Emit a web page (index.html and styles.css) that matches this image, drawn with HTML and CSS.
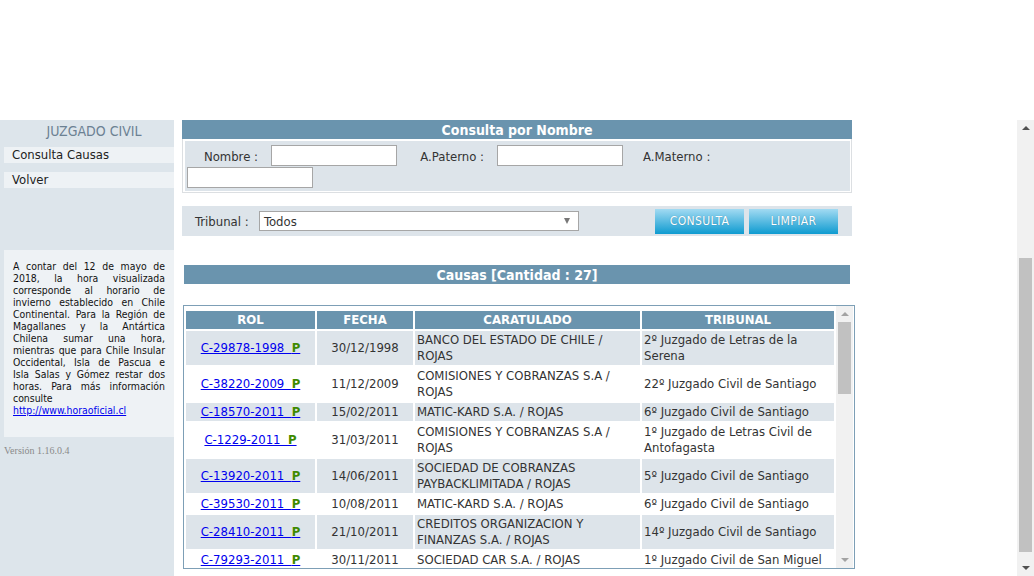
FILE: index.html
```html
<!DOCTYPE html>
<html lang="es">
<head>
<meta charset="utf-8">
<title>Consulta por Nombre</title>
<link rel="stylesheet" href="styles.css">
</head>
<body>
<div class="top"></div>
<div class="frames">
  <aside class="sidebar">
    <div class="side-title">JUZGADO CIVIL</div>
    <div class="menu-item">Consulta Causas</div>
    <div class="menu-item">Volver</div>
    <div class="info">
      <span class="jl">A contar del 12 de mayo de</span>
      <span class="jl">2018, la hora visualizada</span>
      <span class="jl">corresponde al horario de</span>
      <span class="jl">invierno establecido en Chile</span>
      <span class="jl">Continental. Para la Región de</span>
      <span class="jl">Magallanes y la Antártica</span>
      <span class="jl">Chilena sumar una hora,</span>
      <span class="jl">mientras que para Chile Insular</span>
      <span class="jl">Occidental, Isla de Pascua e</span>
      <span class="jl">Isla Salas y Gómez restar dos</span>
      <span class="jl">horas. Para más información</span>
      <span class="ll">consulte</span>
      <a class="ll link" href="#">http://www.horaoficial.cl</a>
    </div>
    <div class="version">Versión 1.16.0.4</div>
  </aside>
  <main class="main">
    <div class="bar">Consulta por Nombre</div>
    <div class="form-box">
      <div class="form-inner">
        <label class="lbl l1">Nombre :</label><input class="txt" type="text">
        <label class="lbl l2">A.Paterno :</label><input class="txt" type="text">
        <label class="lbl l3">A.Materno :</label><input class="txt" type="text">
      </div>
    </div>
    <div class="trib-row">
      <span class="trib-lbl">Tribunal :</span>
      <div class="select"><span>Todos</span><span class="caret"></span></div>
      <div class="btns">
        <button class="btn">CONSULTA</button>
        <button class="btn">LIMPIAR</button>
      </div>
    </div>
    <div class="bar bar2">Causas [Cantidad : 27]</div>
    <div class="grid-box">
      <div class="grid-scroll">
        <table class="grid">
          <colgroup><col class="c1"><col class="c2"><col class="c3"><col class="c4"></colgroup>
          <thead>
            <tr><th>ROL</th><th>FECHA</th><th>CARATULADO</th><th>TRIBUNAL</th></tr>
          </thead>
          <tbody>
            <tr class="odd"><td class="cen"><a href="#">C-29878-1998&nbsp; <span class="p">P</span></a></td><td class="cen">30/12/1998</td><td>BANCO DEL ESTADO DE CHILE / ROJAS</td><td>2º Juzgado de Letras de la Serena</td></tr>
            <tr><td class="cen"><a href="#">C-38220-2009&nbsp; <span class="p">P</span></a></td><td class="cen">11/12/2009</td><td>COMISIONES Y COBRANZAS S.A / ROJAS</td><td>22º Juzgado Civil de Santiago</td></tr>
            <tr class="odd"><td class="cen"><a href="#">C-18570-2011&nbsp; <span class="p">P</span></a></td><td class="cen">15/02/2011</td><td>MATIC-KARD S.A. / ROJAS</td><td>6º Juzgado Civil de Santiago</td></tr>
            <tr><td class="cen"><a href="#">C-1229-2011&nbsp; <span class="p">P</span></a></td><td class="cen">31/03/2011</td><td>COMISIONES Y COBRANZAS S.A / ROJAS</td><td>1º Juzgado de Letras Civil de Antofagasta</td></tr>
            <tr class="odd"><td class="cen"><a href="#">C-13920-2011&nbsp; <span class="p">P</span></a></td><td class="cen">14/06/2011</td><td>SOCIEDAD DE COBRANZAS PAYBACKLIMITADA / ROJAS</td><td>5º Juzgado Civil de Santiago</td></tr>
            <tr><td class="cen"><a href="#">C-39530-2011&nbsp; <span class="p">P</span></a></td><td class="cen">10/08/2011</td><td>MATIC-KARD S.A. / ROJAS</td><td>6º Juzgado Civil de Santiago</td></tr>
            <tr class="odd"><td class="cen"><a href="#">C-28410-2011&nbsp; <span class="p">P</span></a></td><td class="cen">21/10/2011</td><td>CREDITOS ORGANIZACION Y FINANZAS S.A. / ROJAS</td><td>14º Juzgado Civil de Santiago</td></tr>
            <tr><td class="cen"><a href="#">C-79293-2011&nbsp; <span class="p">P</span></a></td><td class="cen">30/11/2011</td><td>SOCIEDAD CAR S.A. / ROJAS</td><td>1º Juzgado Civil de San Miguel</td></tr>
          </tbody>
        </table>
      </div>
      <div class="sb sb-inner">
        <span class="arr up"></span>
        <div class="track"><div class="thumb"></div></div>
        <span class="arr down"></span>
      </div>
    </div>
  </main>
  <div class="sb sb-outer">
    <span class="arr up"></span>
    <div class="track"><div class="thumb"></div></div>
    <span class="arr down"></span>
  </div>
</div>
</body>
</html>
```

FILE: styles.css
```css
* { box-sizing: border-box; }
html, body { margin: 0; padding: 0; background: #fff; }
body {
  font-family: "DejaVu Sans", Verdana, sans-serif;
  font-stretch: condensed;
  font-size: 13px;
  color: #333;
  width: 1034px;
  height: 576px;
  overflow: hidden;
}
.top { height: 120px; }
.frames { display: flex; height: 456px; }

/* sidebar */
.sidebar {
  width: 174px;
  background: #dde5eb;
  display: flex;
  flex-direction: column;
}
.side-title {
  text-align: center;
  color: #6c8193;
  font-size: 14px;
  line-height: 16px;
  padding: 3px 0 0 14px;
  height: 27px;
}
.menu-item {
  margin-left: 4px;
  background: #eef2f5;
  height: 16px;
  line-height: 16px;
  padding-left: 8px;
  font-size: 13px;
  margin-bottom: 9px;
  color: #222;
}
.info {
  margin: 53px 0 0 4px;
  background: #eef2f5;
  padding: 10px 9px 10px 9px;
  font-size: 10.4px;
  line-height: 12px;
  color: #111;
  height: 187px;
}
.jl { display: block; text-align: justify; text-align-last: justify; white-space: nowrap; }
.ll { display: block; }
.link { color: #0000ee; text-decoration: underline; }
.version {
  font-family: "Liberation Serif", "Times New Roman", serif;
  font-stretch: normal;
  font-size: 10px;
  color: #8a8a8a;
  margin: 8px 0 0 4px;
}

/* main */
.main { width: 843px; padding-left: 8px; }
.bar {
  width: 670px;
  height: 19px;
  background: #6a94ae;
  color: #fff;
  font-weight: bold;
  font-size: 14px;
  line-height: 20px;
  text-align: center;
}
.form-box {
  width: 670px;
  border: 1px solid #dcdfe2;
  border-top: 0;
  background: #fff;
  padding: 2px 1px 1px 2px;
}
.form-inner {
  background: #dde4ea;
  display: flex;
  flex-wrap: wrap;
  align-items: center;
  padding: 4px 0 2px 2px;
}
.lbl {
  display: inline-block;
  text-align: right;
  padding-right: 13px;
  font-size: 13px;
  color: #333;
}
.l1 { width: 84px; }
.l2 { width: 100px; }
.l3 { width: 102px; text-align: left; padding-left: 20px; }
.txt {
  width: 126px;
  height: 21px;
  margin: 0 0 1px 0;
  border: 1px solid #a6a6a6;
  background: #fff;
  padding: 0 2px;
  font: inherit;
}
.trib-row {
  width: 670px;
  margin-top: 13px;
  height: 30px;
  background: #dde4ea;
  display: flex;
  align-items: center;
  padding-left: 13px;
}
.trib-lbl { font-size: 13px; width: 64px; }
.select {
  width: 320px;
  height: 20px;
  border: 1px solid #a6a6a6;
  background: #fff;
  display: flex;
  align-items: center;
  justify-content: space-between;
  padding: 0 8px 0 4px;
  font-size: 13px;
}
.caret {
  width: 0; height: 0;
  border-left: 3.5px solid transparent;
  border-right: 3.5px solid transparent;
  border-top: 6px solid #777;
}
.btns { display: flex; gap: 5px; margin-left: 76px; }
.btn {
  width: 89px;
  height: 25px;
  border: 0;
  padding: 0;
  color: #fff;
  font-family: inherit;
  font-stretch: condensed;
  font-size: 12px;
  letter-spacing: 0.4px;
  background: linear-gradient(#a2daf2, #0e9bd0);
  text-shadow: 0 0 1px rgba(0,60,90,0.45);
}
.bar2 { width: 666px; margin: 29px 0 0 2px; font-size: 14px; }

/* grid */
.grid-box {
  width: 672px;
  height: 264px;
  margin: 21px 0 0 1px;
  border: 1px solid #7d9fb6;
  display: flex;
  overflow: hidden;
}
.grid-scroll { width: 652px; overflow: hidden; padding-top: 3px; }
.grid {
  table-layout: fixed;
  width: 652px;
  border-collapse: separate;
  border-spacing: 2px;
  font-size: 13px;
}
.c1 { width: 129px; } .c2 { width: 96px; } .c3 { width: 225px; } .c4 { width: 192px; }
.grid th {
  background: #6a94ae;
  color: #fff;
  font-weight: bold;
  height: 18px;
  line-height: 16px;
  padding: 1px 2px;
}
.grid td {
  padding: 1px 2px;
  line-height: 16px;
  vertical-align: middle;
  color: #333;
}
.grid tr.odd td { background: #dde4ea; }
.grid td.cen { text-align: center; }
.grid a { color: #0000ee; text-decoration: underline; }
.p { color: #3f8a00; font-weight: bold; }

/* scrollbars */
.sb {
  width: 17px;
  background: #f1f1f1;
  display: flex;
  flex-direction: column;
  align-items: center;
}
.sb .arr { width: 0; height: 0; border-left: 4px solid transparent; border-right: 4px solid transparent; }
.sb .up { border-bottom: 4px solid #a3a3a3; margin-top: 6px; }
.sb .down { border-top: 4px solid #a3a3a3; margin-bottom: 6px; }
.sb .track { flex: 1; width: 100%; padding: 0 2px; display: flex; flex-direction: column; }
.sb-outer .up, .sb-outer .down { border-bottom-color: #505050; border-top-color: #505050; }
.sb-outer .track { padding-top: 128px; padding-bottom: 14px; }
.sb-outer .thumb { flex: 1; background: #c1c1c1; }
.sb-inner .track { padding-top: 6px; }
.sb-inner .thumb { height: 72px; background: #c1c1c1; }
```
